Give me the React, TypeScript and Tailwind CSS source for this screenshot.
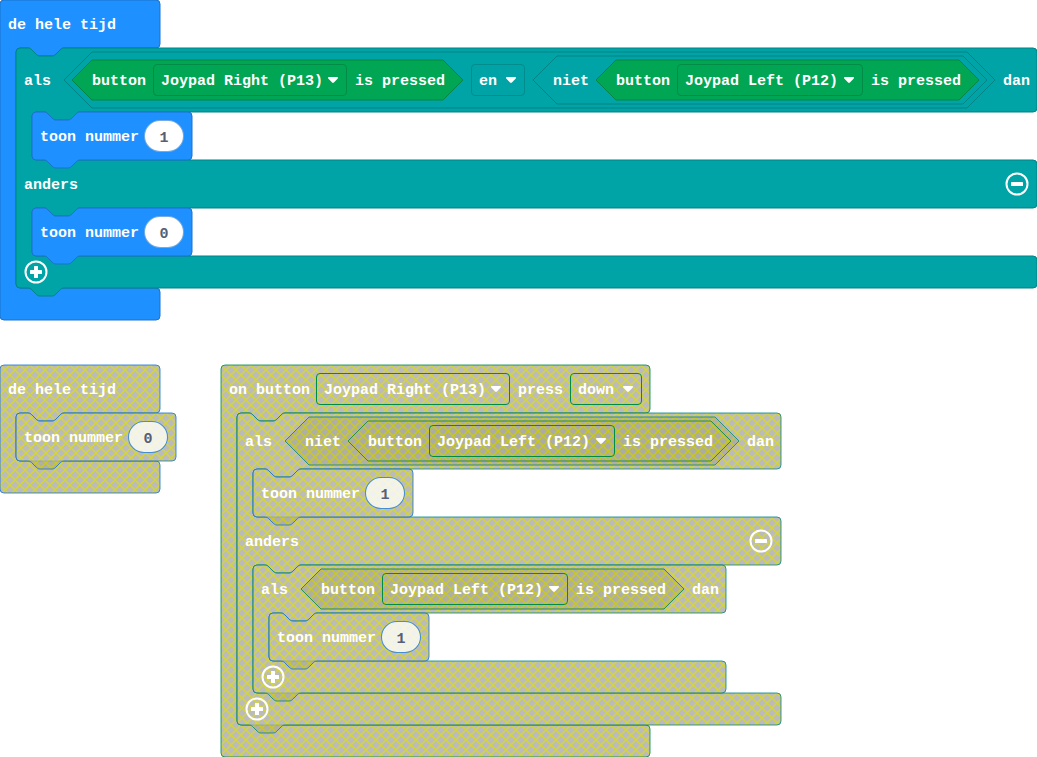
import { createContext, useContext, useId, useLayoutEffect, useRef, useState } from "react";
import type { ReactNode, RefObject } from "react";

type Tone = "basic" | "logic" | "input";

const FILL: Record<Tone, string> = {
  basic: "fill-[#1e90ff]",
  logic: "fill-[#00a4a6]",
  input: "fill-[#00a653]",
};
const STROKE: Record<Tone, string> = {
  basic: "stroke-[#1873cc]",
  logic: "stroke-[#008385]",
  input: "stroke-[#008542]",
};
const BORDER: Record<Tone, string> = {
  basic: "border-[#1a7cdc]",
  logic: "border-[#008b8d]",
  input: "border-[#008c46]",
};

const Disabled = createContext(false);

/* ---------- geometry ---------- */

const SPINE = 16;
const NOTCH_RIGHT = "c 2,0 3,1 4,2 l 4,4 c 1,1 2,2 4,2 h 12 c 2,0 3,-1 4,-2 l 4,-4 c 1,-1 2,-2 4,-2";
const NOTCH_LEFT = "c -2,0 -3,1 -4,2 l -4,4 c -1,1 -2,2 -4,2 h -12 c -2,0 -3,-1 -4,-2 l -4,-4 c -1,-1 -2,-2 -4,-2";

interface Band {
  top: number;
  bottom: number;
}

function statementPath(width: number, bands: Band[], hat: boolean) {
  const parts = ["M 0,4 a 4,4 0 0,1 4,-4"];
  if (!hat) parts.push("H 12", NOTCH_RIGHT);
  bands.forEach((band, i) => {
    if (i > 0) {
      parts.push(`V ${band.top - 4} a 4,4 0 0,0 4,4`);
    }
    parts.push(`H ${width - 4} a 4,4 0 0,1 4,4 V ${band.bottom - 4} a 4,4 0 0,1 -4,4`);
    if (i < bands.length - 1) {
      parts.push(`H ${SPINE + 48}`, NOTCH_LEFT, `H ${SPINE + 4} a 4,4 0 0,0 -4,4`);
    }
  });
  if (!hat) parts.push("H 48", NOTCH_LEFT);
  parts.push("H 4 a 4,4 0 0,1 -4,-4 Z");
  return parts.join(" ");
}

function useMeasured<T>(ref: RefObject<HTMLDivElement | null>, read: (el: HTMLDivElement) => T) {
  const [value, setValue] = useState<T | null>(null);
  useLayoutEffect(() => {
    const el = ref.current;
    if (!el) return;
    const update = () => setValue(read(el));
    update();
    const observer = new ResizeObserver(update);
    observer.observe(el);
    return () => observer.disconnect();
  }, []);
  return value;
}

function Shape({ d, tone }: { d: string; tone: Tone }) {
  const disabled = useContext(Disabled);
  return (
    <svg aria-hidden="true" className="pointer-events-none absolute inset-0 h-full w-full overflow-visible">
      <path
        d={d}
        className={
          STROKE[tone] + " " + (disabled ? "fill-[url(#hatch)] [fill-opacity:0.8] [stroke-opacity:0.8]" : FILL[tone])
        }
      />
    </svg>
  );
}

/* ---------- blocks ---------- */

function Statement({ tone, hat = false, children }: { tone: Tone; hat?: boolean; children: ReactNode }) {
  const ref = useRef<HTMLDivElement>(null);
  const size = useMeasured(ref, (el) => ({
    width: el.offsetWidth,
    bands: Array.from(el.children)
      .filter((c): c is HTMLElement => c instanceof HTMLElement && c.dataset.band === "true")
      .map((c) => ({ top: c.offsetTop, bottom: c.offsetTop + c.offsetHeight })),
  }));
  return (
    <div ref={ref} className="relative flex w-max flex-col">
      {size && <Shape tone={tone} d={statementPath(size.width, size.bands, hat)} />}
      {children}
    </div>
  );
}

function Header({ children }: { children: ReactNode }) {
  return (
    <div data-band="true" className="relative flex min-h-12 min-w-40 items-center gap-2 px-2 py-1">
      {children}
    </div>
  );
}

function Footer({ children }: { children?: ReactNode }) {
  return (
    <div data-band="true" className="relative flex h-8 items-center px-2">
      {children}
    </div>
  );
}

function Mouth({ children }: { children: ReactNode }) {
  return <div className="relative ml-4 w-0">{children}</div>;
}

function Condition({ tone, nested = false, children }: { tone: Tone; nested?: boolean; children: ReactNode }) {
  const ref = useRef<HTMLDivElement>(null);
  const size = useMeasured(ref, (el) => ({ w: el.offsetWidth, h: el.offsetHeight }));
  const r = size ? size.h / 2 : 0;
  return (
    <div ref={ref} className={"relative flex items-center py-1 " + (nested ? "" : "px-5")}>
      {size && (
        <Shape tone={tone} d={`M ${r},0 H ${size.w - r} L ${size.w},${r} L ${size.w - r},${size.h} H ${r} L 0,${r} Z`} />
      )}
      <div className="relative flex items-center gap-2">{children}</div>
    </div>
  );
}

/* ---------- fields ---------- */

function Label({ width, children }: { width: string; children: string }) {
  return <span className={"pt-1 whitespace-nowrap " + width}>{children}</span>;
}

function Dropdown({ tone, label, width, value }: { tone: Tone; label: string; width: string; value: string }) {
  return (
    <div className={"relative h-8 " + width}>
      <select
        aria-label={label}
        defaultValue={value}
        className={
          "h-full w-full appearance-none rounded border bg-transparent pt-1 pl-[7px] outline-none " + BORDER[tone]
        }
      >
        <option>{value}</option>
      </select>
      <svg
        aria-hidden="true"
        viewBox="0 0 10 6"
        className="pointer-events-none absolute top-[13px] right-[9px] h-[6px] w-[10px] fill-white"
      >
        <path d="M.8 0h8.4c.5 0 .8.3.8.7 0 .6-.3 1-.7 1.4L5.9 5.5c-.6.6-1.2.6-1.8 0L.7 2.1C.3 1.7 0 1.3 0 .7 0 .3.3 0 .8 0z" />
      </svg>
    </div>
  );
}

function NumberField({ value }: { value: string }) {
  const id = useId();
  const disabled = useContext(Disabled);
  return (
    <>
      <label htmlFor={id} className="w-24 pt-1 whitespace-nowrap">
        toon nummer
      </label>
      <input
        id={id}
        type="text"
        inputMode="numeric"
        defaultValue={value}
        className={
          "h-8 w-10 rounded-full border pt-1 text-center text-[#575e75] outline-none " +
          (disabled ? "border-[#1873cc]/80 bg-white/80" : "border-[#1873cc]/60 bg-white")
        }
      />
    </>
  );
}

function RoundButton({ kind }: { kind: "plus" | "minus" }) {
  return (
    <button type="button" aria-label={kind === "plus" ? "toevoegen" : "verwijderen"} className="size-6 shrink-0">
      <svg viewBox="0 0 24 24" className="size-6" aria-hidden="true">
        <circle cx="12" cy="12" r="10.5" fill="none" stroke="white" strokeWidth="2" />
        <rect x="6" y="10" width="12" height="4" rx="0.6" fill="white" />
        {kind === "plus" && <rect x="10" y="6" width="4" height="12" rx="0.6" fill="white" />}
      </svg>
    </button>
  );
}

/* ---------- block kinds ---------- */

function Forever({ children }: { children: ReactNode }) {
  return (
    <Statement tone="basic" hat>
      <Header>
        <Label width="w-[106px]">de hele tijd</Label>
      </Header>
      <Mouth>{children}</Mouth>
      <Footer />
    </Statement>
  );
}

function ShowNumber({ value }: { value: string }) {
  return (
    <Statement tone="basic">
      <Header>
        <NumberField value={value} />
      </Header>
    </Statement>
  );
}

function Pressed({ side }: { side: "left" | "right" }) {
  return (
    <Condition tone="input">
      <Label width="w-[53px]">button</Label>
      <Dropdown
        tone="input"
        label="button"
        width={side === "left" ? "w-[186px]" : "w-[194px]"}
        value={side === "left" ? "Joypad Left (P12)" : "Joypad Right (P13)"}
      />
      <Label width="w-[88px]">is pressed</Label>
    </Condition>
  );
}

function Not({ children }: { children: ReactNode }) {
  return (
    <Condition tone="logic" nested>
      <span className="w-[47px] pt-1 pl-5">niet</span>
      <span className="ml-2 pr-2">{children}</span>
    </Condition>
  );
}

function If({ condition, then, otherwise }: { condition: ReactNode; then: ReactNode; otherwise?: ReactNode }) {
  return (
    <Statement tone="logic">
      <Header>
        <Label width="w-8">als</Label>
        {condition}
        <Label width="w-[26px]">dan</Label>
      </Header>
      <Mouth>{then}</Mouth>
      {otherwise && (
        <div data-band="true" className="relative flex h-12 items-center justify-between px-2">
          <span className="pt-1">anders</span>
          <RoundButton kind="minus" />
        </div>
      )}
      {otherwise && <Mouth>{otherwise}</Mouth>}
      <Footer>
        <RoundButton kind="plus" />
      </Footer>
    </Statement>
  );
}

export default function App() {
  return (
    <main className="flex min-h-screen flex-col items-start gap-[45px] bg-white font-['Liberation_Mono',monospace] text-[15px] leading-5 font-bold text-white">
      <svg aria-hidden="true" className="absolute size-0">
        <defs>
          <pattern id="hatch" patternUnits="userSpaceOnUse" width="10" height="10">
            <rect width="10" height="10" fill="#aaa" />
            <path d="M 0 0 L 10 10 M 10 0 L 0 10" stroke="#cc0" strokeWidth="1.4" />
          </pattern>
        </defs>
      </svg>

      <Forever>
        <If
          condition={
            <Condition tone="logic" nested>
              <span className="pl-2">
                <Pressed side="right" />
              </span>
              <Dropdown tone="logic" label="operator" width="w-[54px]" value="en" />
              <span className="pr-2">
                <Not>
                  <Pressed side="left" />
                </Not>
              </span>
            </Condition>
          }
          then={<ShowNumber value="1" />}
          otherwise={<ShowNumber value="0" />}
        />
      </Forever>

      <Disabled.Provider value={true}>
        <div className="flex items-start gap-[61px]">
          <Forever>
            <ShowNumber value="0" />
          </Forever>

          <Statement tone="input" hat>
            <Header>
              <Label width="w-[79px]">on button</Label>
              <Dropdown tone="input" label="on button" width="w-[194px]" value="Joypad Right (P13)" />
              <Label width="w-11">press</Label>
              <Dropdown tone="input" label="press" width="w-[72px]" value="down" />
            </Header>
            <Mouth>
              <If
                condition={
                  <Not>
                    <Pressed side="left" />
                  </Not>
                }
                then={<ShowNumber value="1" />}
                otherwise={<If condition={<Pressed side="left" />} then={<ShowNumber value="1" />} />}
              />
            </Mouth>
            <Footer />
          </Statement>
        </div>
      </Disabled.Provider>
    </main>
  );
}
